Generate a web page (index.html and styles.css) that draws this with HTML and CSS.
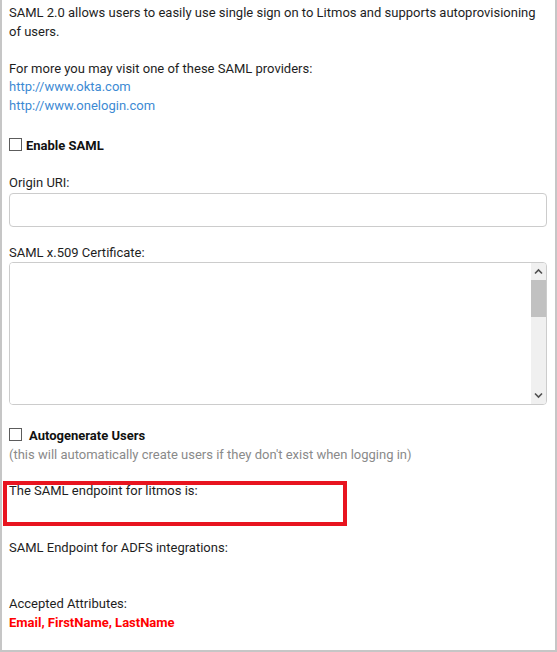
FILE: index.html
```html
<!DOCTYPE html>
<html lang="en">
<head>
<meta charset="utf-8">
<title>SAML Settings</title>
<link rel="stylesheet" href="styles.css">
</head>
<body>
<div class="panel">
  <p class="intro">SAML 2.0 allows users to easily use single sign on to Litmos and supports autoprovisioning of users.</p>

  <p class="providers">
    For more you may visit one of these SAML providers:<br>
    <a href="#">http://www.okta.com</a><br>
    <a href="#">http://www.onelogin.com</a>
  </p>

  <label class="check-row enable">
    <input type="checkbox" class="box">
    <span class="check-label">Enable SAML</span>
  </label>

  <div class="field origin">
    <label class="field-label" for="origin">Origin URI:</label>
    <input id="origin" type="text" class="text-input">
  </div>

  <div class="field cert">
    <label class="field-label" for="cert">SAML x.509 Certificate:</label>
    <div class="cert-box">
      <textarea id="cert" class="cert-text"></textarea>
      <div class="scrollbar">
        <svg class="arrow" width="15" height="17" viewBox="0 0 15 17"><path d="M4 10.5 L7.5 7 L11 10.5" fill="none" stroke="#505050" stroke-width="1.6"/></svg>
        <div class="track"><div class="thumb"></div></div>
        <svg class="arrow" width="15" height="17" viewBox="0 0 15 17"><path d="M4 6.5 L7.5 10 L11 6.5" fill="none" stroke="#505050" stroke-width="1.6"/></svg>
      </div>
    </div>
  </div>

  <label class="check-row auto">
    <input type="checkbox" class="box">
    <span class="check-label wide">Autogenerate Users</span>
  </label>
  <p class="hint">(this will automatically create users if they don't exist when logging in)</p>

  <div class="endpoint">
    <p>The SAML endpoint for litmos is:</p>
    <p class="value"></p>
    <div class="highlight"></div>
  </div>

  <p class="adfs">SAML Endpoint for ADFS integrations:</p>
  <p class="value adfs-value"></p>

  <p class="attrs">Accepted Attributes:</p>
  <p class="attr-list">Email, FirstName, LastName</p>
</div>
</body>
</html>
```

FILE: styles.css
```css
* {
  box-sizing: border-box;
}

html, body {
  margin: 0;
  background: #fff;
}

body {
  font-family: Roboto, "Noto Sans", Arial, sans-serif;
  font-size: 13px;
  line-height: 18.6px;
  color: #1e1e1e;
}

p {
  margin: 0;
}

.panel {
  width: 557px;
  height: 652px;
  border: 2px solid #c6c6c6;
  border-top: 0;
  padding: 4px 8px 0 7px;
}

a {
  color: #3d8ad3;
  text-decoration: none;
}

.intro {
  margin-bottom: 18.6px;
}

/* checkbox rows */
.check-row {
  display: flex;
  align-items: flex-start;
  font-weight: bold;
  color: #111;
}

.box {
  appearance: none;
  -webkit-appearance: none;
  width: 13px;
  height: 13px;
  margin: 1px 0 0 0;
  border: 1px solid #5c5c5c;
  background: #fff;
  flex: none;
}

.check-label {
  margin-left: 4px;
}

.check-label.wide {
  margin-left: 7px;
}

.enable {
  margin-top: 21px;
}

/* text fields */
.field-label {
  display: block;
  font-weight: normal;
}

.origin {
  margin-top: 19px;
}

.text-input {
  display: block;
  width: 100%;
  height: 34px;
  border: 1px solid #cccccc;
  border-radius: 4px;
  background: #fff;
  font: inherit;
}

.cert {
  margin-top: 17px;
}

.cert-box {
  display: flex;
  height: 143px;
  border: 1px solid #cccccc;
  border-radius: 4px;
  overflow: hidden;
}

.cert-text {
  flex: 1;
  border: 0;
  resize: none;
  outline: none;
  font: inherit;
  overflow: hidden;
  background: #fff;
}

.scrollbar {
  width: 15px;
  display: flex;
  flex-direction: column;
  background: #f0f0f0;
}

.arrow {
  display: block;
  flex: none;
}

.track {
  flex: 1;
}

.thumb {
  height: 37px;
  background: #c1c1c1;
}

.auto {
  margin-top: 22px;
}

.hint {
  color: #8a8a8a;
}

/* endpoint block with the red callout frame */
.endpoint {
  position: relative;
  margin-top: 17.5px;
}

.value {
  height: 18.6px;
}

.highlight {
  position: absolute;
  left: -6px;
  top: -1px;
  width: 344px;
  height: 45px;
  border: 4px solid #e8141f;
}

.adfs {
  margin-top: 20px;
}

.attrs {
  margin-top: 19px;
}

.attr-list {
  color: #ff0000;
  font-weight: bold;
}
```
